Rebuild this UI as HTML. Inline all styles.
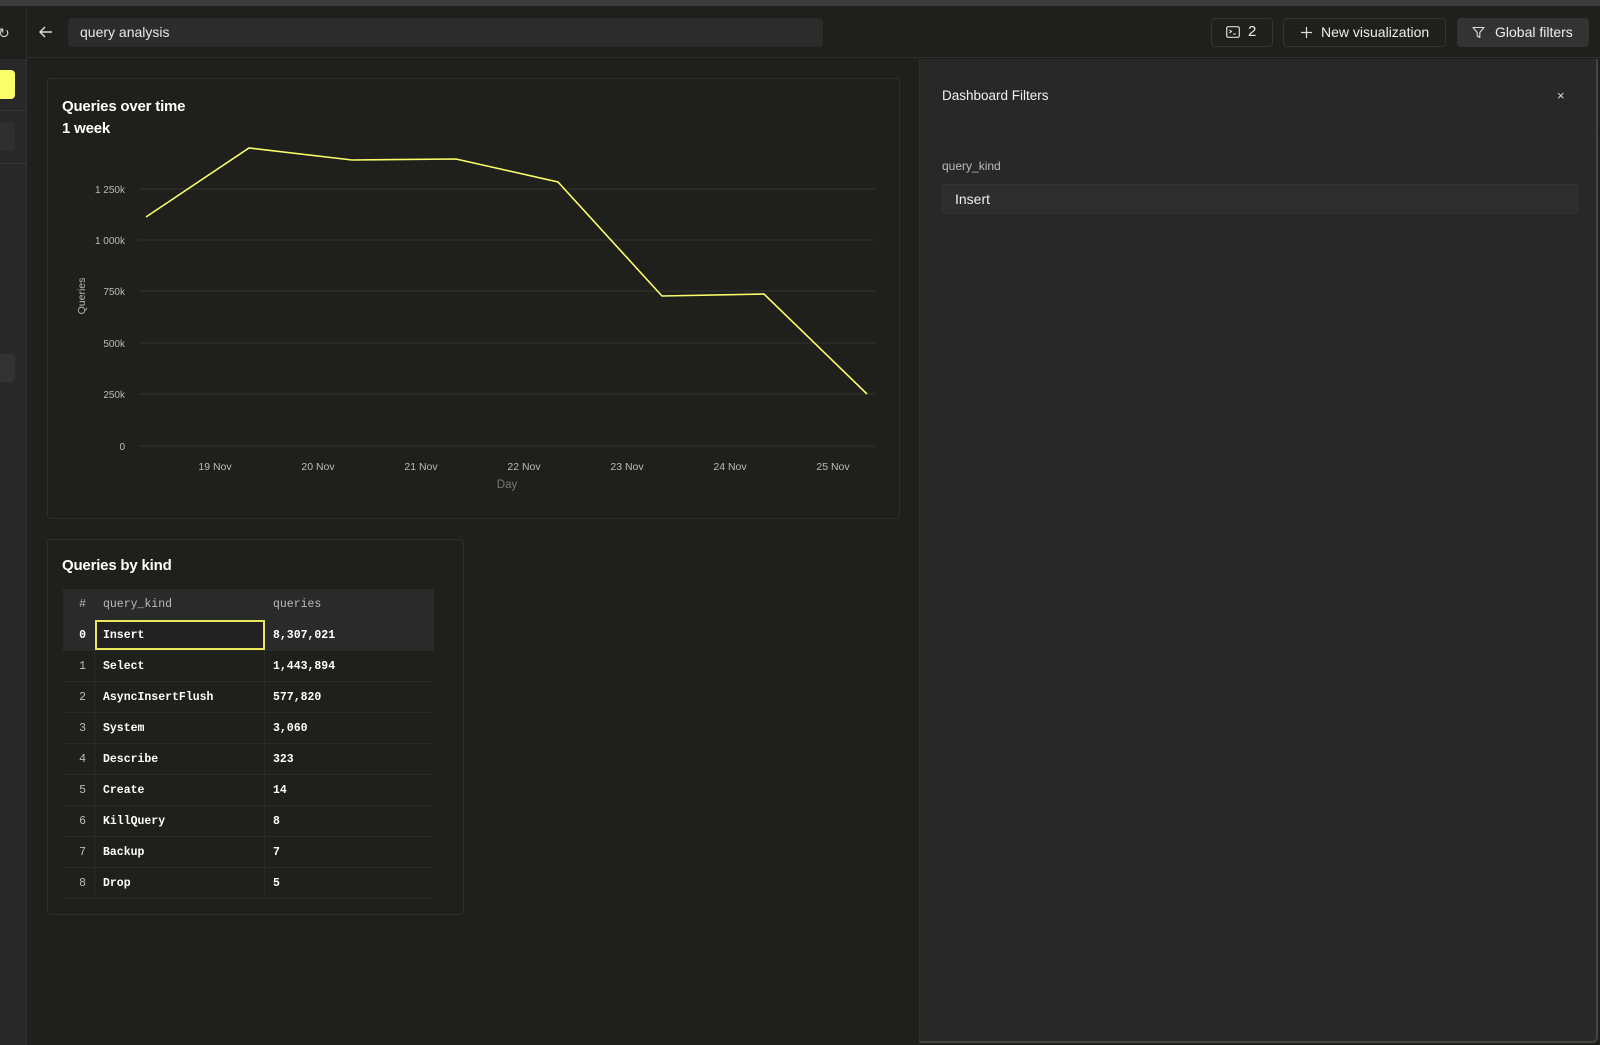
<!DOCTYPE html>
<html><head><meta charset="utf-8"><style>
*{box-sizing:border-box;margin:0;padding:0}
body{width:1600px;height:1045px;background:#1f1f1c;font-family:"Liberation Sans",sans-serif;color:#fff;position:relative;overflow:hidden}
.a{position:absolute}
.mono{font-family:"Liberation Mono",monospace}
</style></head><body>
<div class="a" style="left:0;top:0;width:1600px;height:6px;background:#3c3c3c"></div>
<div class="a" style="left:0;top:6px;width:1600px;height:52px;background:#1f1f1c;border-bottom:1px solid #2e2e2c"></div>
<!-- sidebar -->
<div class="a" style="left:0;top:59px;width:27px;height:986px;background:#282828;border-right:1px solid #2f2f2f"></div>
<div class="a" style="left:0;top:6px;width:27px;height:52px;background:#1f1f1c;border-right:1px solid #2f2f2f"></div>
<div class="a" style="left:-2px;top:25px;font-size:14px;color:#ccc">↻</div>
<div class="a" style="left:-6px;top:70px;width:21px;height:29px;background:#faff69;border-radius:4px"></div>
<div class="a" style="left:0;top:110px;width:27px;height:1px;background:#353535"></div>
<div class="a" style="left:-6px;top:122px;width:21px;height:29px;background:#2f2f2f;border-radius:4px"></div>
<div class="a" style="left:0;top:163px;width:27px;height:1px;background:#353535"></div>
<div class="a" style="left:-6px;top:354px;width:21px;height:28px;background:#333;border-radius:4px"></div>
<!-- header -->
<svg class="a" style="left:38px;top:24px" width="16" height="16" viewBox="0 0 16 16"><path d="M14 8H2M7 3L2 8l5 5" stroke="#ddd" stroke-width="1.4" fill="none"/></svg>
<div class="a" style="left:68px;top:18px;width:755px;height:29px;background:#2c2c2c;border-radius:4px;font-size:14px;line-height:29px;padding-left:12px;color:#e8e8e8">query analysis</div>
<div class="a" style="left:1211px;top:18px;width:62px;height:29px;border:1px solid #333;border-radius:4px"></div>
<svg class="a" style="left:1226px;top:26px" width="14" height="12" viewBox="0 0 14 12"><rect x="0.7" y="0.7" width="12.6" height="10.6" rx="1.5" stroke="#ddd" fill="none" stroke-width="1.2"/><path d="M3.5 4l2 1.5-2 1.5M7 8h3" stroke="#ddd" stroke-width="1.1" fill="none"/></svg>
<div class="a" style="left:1248px;top:23px;font-size:15px;color:#eee">2</div>
<div class="a" style="left:1283px;top:18px;width:163px;height:29px;border:1px solid #333;border-radius:4px;font-size:14px;line-height:27px;padding-left:37px;color:#eee">New visualization</div>
<svg class="a" style="left:1301px;top:27px" width="11" height="11" viewBox="0 0 11 11"><path d="M5.5 0v11M0 5.5h11" stroke="#ddd" stroke-width="1.2"/></svg>
<div class="a" style="left:1457px;top:18px;width:132px;height:29px;background:#333;border-radius:4px;font-size:14px;line-height:29px;padding-left:38px;color:#eee">Global filters</div>
<svg class="a" style="left:1472px;top:26px" width="13" height="13" viewBox="0 0 13 13"><path d="M1 1.5h11L7.8 6.5V11.5L5.2 10V6.5z" stroke="#ddd" stroke-width="1.1" fill="none" stroke-linejoin="round"/></svg>
<!-- right panel -->
<div class="a" style="left:919px;top:59px;width:679px;height:984px;background:#282828;border-left:1px solid #2f2f2f;border-right:2px solid #444;border-bottom:2px solid #444;border-bottom-right-radius:6px"></div>
<div class="a" style="left:942px;top:88px;font-size:13.5px;color:#f0f0f0">Dashboard Filters</div>
<div class="a" style="left:1557px;top:88px;font-size:13px;color:#ddd">×</div>
<div class="a" style="left:920px;top:134px;width:676px;height:1px;background:#2b2b2b"></div>
<div class="a" style="left:942px;top:159px;font-size:12px;color:#bbb">query_kind</div>
<div class="a" style="left:942px;top:184px;width:636px;height:30px;background:#2d2d2d;border:1px solid #333;border-radius:3px;font-size:14px;line-height:28px;padding-left:12px;color:#eee">Insert</div>
<!-- chart card -->
<div class="a" style="left:47px;top:78px;width:853px;height:441px;border:1px solid #2e2e2c;border-radius:4px"></div>
<div class="a" style="left:62px;top:96px;font-size:15px;font-weight:bold;line-height:22px;letter-spacing:-0.2px">Queries over time<br>1 week</div>
<svg class="a" style="left:0;top:0" width="900" height="520">
<g stroke="#333331" stroke-width="1">
<line x1="139" y1="189" x2="875" y2="189"/><line x1="139" y1="240" x2="875" y2="240"/><line x1="139" y1="291" x2="875" y2="291"/><line x1="139" y1="343" x2="875" y2="343"/><line x1="139" y1="394" x2="875" y2="394"/><line x1="139" y1="446" x2="875" y2="446"/></g>
<g font-family="Liberation Sans" font-size="10" fill="#bbb" text-anchor="end">
<text x="125" y="193">1 250k</text><text x="125" y="244">1 000k</text><text x="125" y="295">750k</text><text x="125" y="347">500k</text><text x="125" y="398">250k</text><text x="125" y="450">0</text></g>
<g font-family="Liberation Sans" font-size="10.5" fill="#bbb" text-anchor="middle">
<text x="215" y="470">19 Nov</text><text x="318" y="470">20 Nov</text><text x="421" y="470">21 Nov</text><text x="524" y="470">22 Nov</text><text x="627" y="470">23 Nov</text><text x="730" y="470">24 Nov</text><text x="833" y="470">25 Nov</text>
<text x="507" y="488" fill="#777" font-size="11.5">Day</text>
<text transform="translate(85,296) rotate(-90)" font-size="10.5">Queries</text></g>
<polyline points="146,217 249,148 352,160 456,159 558,182 662,296 764,294 867,394" fill="none" stroke="#faff69" stroke-width="1.6"/>
</svg>
<!-- table card -->
<div class="a" style="left:47px;top:539px;width:417px;height:376px;border:1px solid #2e2e2c;border-radius:4px"></div>
<div class="a" style="left:62px;top:557px;font-size:15px;font-weight:bold;letter-spacing:-0.2px">Queries by kind</div>
<div class="a mono" style="left:63px;top:589px;width:371px;font-size:11.5px">
<style>.r{display:flex;height:31px;line-height:31px;border-bottom:1px solid #2a2a28}.r div{white-space:pre}.c0{width:32px;text-align:right;padding-right:8px;color:#bbb;border-right:1px solid #2a2a28}.c1{width:170px;padding-left:8px;border-right:1px solid #2a2a28;font-weight:bold}.c2{padding-left:8px;font-weight:bold}</style>
<div class="r" style="background:#2a2a2a"><div class="c0">#</div><div class="c1" style="font-weight:normal;color:#bbb">query_kind</div><div class="c2" style="font-weight:normal;color:#bbb">queries</div></div>
<div class="r" style="background:#2a2a2a"><div class="c0" style="color:#fff;font-weight:bold">0</div><div class="c1" style="outline:2px solid #e6e85a;outline-offset:-2px;background:#222">Insert</div><div class="c2">8,307,021</div></div>
<div class="r"><div class="c0">1</div><div class="c1">Select</div><div class="c2">1,443,894</div></div>
<div class="r"><div class="c0">2</div><div class="c1">AsyncInsertFlush</div><div class="c2">577,820</div></div>
<div class="r"><div class="c0">3</div><div class="c1">System</div><div class="c2">3,060</div></div>
<div class="r"><div class="c0">4</div><div class="c1">Describe</div><div class="c2">323</div></div>
<div class="r"><div class="c0">5</div><div class="c1">Create</div><div class="c2">14</div></div>
<div class="r"><div class="c0">6</div><div class="c1">KillQuery</div><div class="c2">8</div></div>
<div class="r"><div class="c0">7</div><div class="c1">Backup</div><div class="c2">7</div></div>
<div class="r"><div class="c0">8</div><div class="c1">Drop</div><div class="c2">5</div></div>
</div>
</body></html>
